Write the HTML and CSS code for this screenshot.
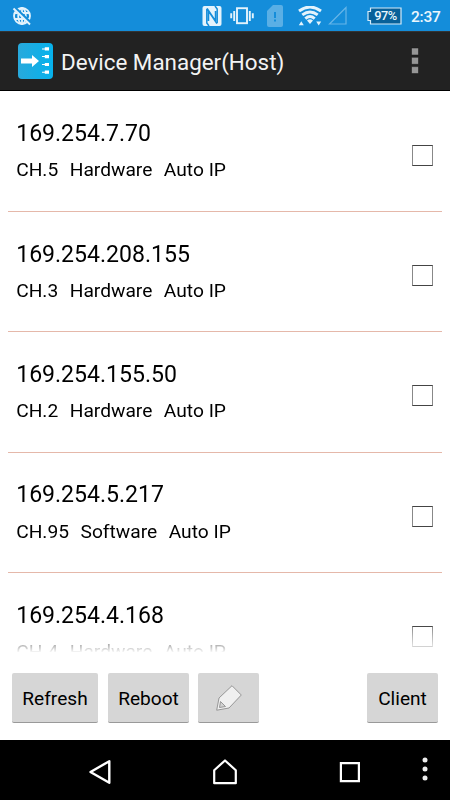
FILE: index.html
```html
<!DOCTYPE html>
<html lang="en">
<head>
<meta charset="utf-8">
<title>Device Manager</title>
<link rel="stylesheet" href="styles.css">
</head>
<body>
<div class="status">
  <svg class="globe" width="20" height="20" viewBox="0 0 20 20" fill="none" stroke="#e4f3fc" stroke-width="1.8"><circle cx="10" cy="10" r="8"/><ellipse cx="10" cy="10" rx="3.8" ry="8"/><path d="M10 2v16M2.500 7h15M2.500 13h15"/><path stroke="#148dda" stroke-width="3.600" d="M2 1.500l17 16"/><path stroke-width="1.900" d="M1.500 2.500l16.500 16"/></svg>
  <div class="icons">
    <svg width="20" height="20" viewBox="0 0 20 20"><rect x=".5" width="19" height="20" rx="2" fill="#e4f3fc"/><path fill="none" stroke="#148dda" stroke-width="1.500" d="M7 20L4.800 17V3.500L5.500 3l8 12V5M13 0l2.200 3v13.500l-.7.500-8-12v10"/></svg>
    <svg width="24" height="18" viewBox="0 0 24 18" fill="none" stroke="#e4f3fc" stroke-width="1.900"><rect x="7" y="1.200" width="10" height="15"/><path d="M4.200 4v10M19.800 4v10M1.200 6.200v5M22.800 6.200v5"/></svg>
    <svg width="16" height="22" viewBox="0 0 16 22"><path fill="#5aafe5" d="M6 0h8q2 0 2 2v18q0 2-2 2H2q-2 0-2-2V6z"/><path stroke="#148dda" stroke-width="2" d="M8 7v6M8 14.500v2"/></svg>
    <svg width="24" height="20" viewBox="0 0 24 20"><path fill="none" stroke="#e4f3fc" stroke-width="2.900" d="M1 5Q12-3 23 5M4.300 8.900Q12 2.900 19.700 8.900M7.300 12.600Q12 8.600 16.700 12.600"/><path fill="#e4f3fc" d="M9 14.500Q12 12 15 14.500L12 18zM.8 19.200l2.500-4 2.500 4zM18.200 15.500h5l-2.500 4z"/></svg>
    <svg width="19" height="19" viewBox="0 0 19 19" fill="none" stroke="#66b5e8" stroke-width="1.200"><path d="M1.500 18H18V1.500z"/></svg>
    <span class="battery"><svg width="35" height="18" viewBox="0 0 35 18"><path fill="#086099" stroke="#d5ecfa" stroke-width="1.200" d="M3.500 1H34v16H3.500v-3.500H1v-9h2.500z"/></svg><b>97%</b></span>
  </div>
  <span class="clock">2:37</span>
</div>
<header class="bar">
  <svg class="logo" width="35" height="36" viewBox="0 0 35 36"><defs><linearGradient id="g"><stop stop-color="#28a9dc"/><stop offset="1" stop-color="#06b2ec"/></linearGradient></defs><rect width="35" height="36" rx="4" fill="url(#g)"/><path fill="#fff" d="M3 15.500h11v-3.500l7 6-7 6v-3.500H3z"/><g fill="#fff"><path d="M26.800 4.300h4.200v3.200h-4.200zM26.800 12h4.200v3.200h-4.200zM26.800 19.900h4.200v3.200h-4.200zM26.800 27.600h4.200v3.200h-4.200z"/><path d="M24 5.400h3v1h-3zM24 13.100h3v1h-3zM24 21h3v1h-3zM24 28.700h3v1h-3z"/></g></svg>
  <h1>Device Manager(Host)</h1>
  <svg class="more" width="8" height="28" viewBox="0 0 8 28" fill="#969696" stroke="#111" stroke-width=".5"><path d="M.5 1h7v7h-7zM.5 10.300h7v7h-7zM.5 19.600h7v7h-7z"/></svg>
</header>
<main class="list">
  <div class="row"><div><div class="ip">169.254.7.70</div><div class="info"><span>CH.5</span><span>Hardware</span><span>Auto IP</span></div></div><i class="check"></i></div>
  <div class="row"><div><div class="ip">169.254.208.155</div><div class="info"><span>CH.3</span><span>Hardware</span><span>Auto IP</span></div></div><i class="check"></i></div>
  <div class="row"><div><div class="ip">169.254.155.50</div><div class="info"><span>CH.2</span><span>Hardware</span><span>Auto IP</span></div></div><i class="check"></i></div>
  <div class="row"><div><div class="ip">169.254.5.217</div><div class="info"><span>CH.95</span><span>Software</span><span>Auto IP</span></div></div><i class="check"></i></div>
  <div class="row"><div><div class="ip">169.254.4.168</div><div class="info"><span>CH.4</span><span>Hardware</span><span>Auto IP</span></div></div><i class="check"></i></div>
</main>
<div class="actions">
  <button class="refresh">Refresh</button>
  <button class="reboot">Reboot</button>
  <button class="edit" aria-label="Edit"><svg width="26" height="26" viewBox="0 0 26 26" fill="#f0f0f0" stroke="#8d8d8d" stroke-width=".9" stroke-linejoin="round"><path d="M.7 25.200L3 13 16 .7 25.300 10 13 23z"/><path fill="#d2d2d2" d="M3.500 22.500L4.500 16.500 9.500 21.500z"/></svg></button>
  <button class="client">Client</button>
</div>
<nav class="nav">
  <svg width="22" height="26" viewBox="0 0 22 26" fill="none" stroke="#fff" stroke-width="2.400" stroke-linejoin="round"><path d="M1.500 13L20.300 2.200v21.600z"/></svg>
  <svg width="26" height="26" viewBox="0 0 26 26" fill="none" stroke="#fff" stroke-width="2.200" stroke-linejoin="round"><path d="M2.200 24.200V11.200L13 1.500l10.800 9.700v13z"/></svg>
  <svg width="22" height="22" viewBox="0 0 22 22" fill="none" stroke="#fff" stroke-width="2.200"><path d="M1.900 2.100h18v18h-18z"/></svg>
  <svg width="6" height="24" viewBox="0 0 6 24" fill="#eee"><circle cx="3" cy="3" r="2.500"/><circle cx="3" cy="12" r="2.500"/><circle cx="3" cy="21" r="2.500"/></svg>
</nav>
</body>
</html>
```

FILE: styles.css
```css
* { box-sizing: border-box; }
body { margin: 0; width: 450px; height: 800px; overflow: hidden; background: #fff; color: #000; font-family: Roboto, sans-serif; display: flex; flex-direction: column; }
svg { display: block; flex: none; }
.status { height: 31px; background: #148dda; display: flex; align-items: center; padding: 0 10px 0 12px; color: #eaf6fd; }
.icons { display: flex; align-items: center; margin-left: auto; }
.icons > :nth-child(2) { margin-left: 8px; }
.icons > :nth-child(3) { margin-left: 13px; }
.icons > :nth-child(4) { margin-left: 15px; }
.icons > :nth-child(5) { margin-left: 6px; }
.battery { display: grid; place-items: center; margin-left: 20px; }
.battery > * { grid-area: 1 / 1; }
.battery b { font-size: 12.800px; font-weight: 500; line-height: 18px; padding-left: 2px; letter-spacing: -.5px; }
.clock { width: 29px; margin-left: 9px; font-size: 15.500px; font-weight: 500; white-space: nowrap; letter-spacing: -.2px; position: relative; top: 1px; }
.bar { height: 60px; background: #222; border-top: 1px solid #343434; border-bottom: 1px solid #000; display: flex; align-items: center; padding: 0 31px 0 18px; }
h1 { margin: 1px 0 0 8px; font-size: 22.400px; font-weight: 400; line-height: 30px; color: #f3f3f3; }
.more { margin-left: auto; }
.list { height: 561px; padding: .6px 8px 0; overflow: hidden; -webkit-mask-image: linear-gradient(#000 535px, transparent 562px); mask-image: linear-gradient(#000 535px, transparent 562px); }
.row { height: 120.400px; border-bottom: 1px solid #e5b8aa; display: flex; justify-content: space-between; padding: 26.600px 9px 0 8.200px; }
.ip { font-size: 23.050px; line-height: 31px; }
.info { display: flex; gap: 11.500px; font-size: 19.200px; line-height: 25px; margin-top: 8.200px; }
.check { width: 21px; height: 21px; border: 1px solid #444; border-left-color: #888; border-right-color: #888; margin-top: 26.400px; }
.actions { height: 88px; display: flex; align-items: flex-start; padding: 21px 12px 0; }
button { height: 50px; margin: 0; padding: 1px 0 0; border: 0; border-bottom: 1px solid #999; border-radius: 2px; background: #d6d6d6; color: #000; font: 19.100px Roboto, sans-serif; }
.refresh { width: 86px; }
.reboot { width: 81px; margin-left: 10px; }
.edit { width: 61px; margin-left: 9px; display: flex; align-items: center; justify-content: center; }
.client { width: 71px; margin-left: auto; }
.nav { height: 60px; background: #000; display: flex; align-items: center; padding: 3px 22px 0 89px; }
.nav svg:nth-child(2) { margin-left: 101px; }
.nav svg:nth-child(3) { margin-left: 101px; }
.nav svg:nth-child(4) { margin-left: auto; margin-top: -5px; }
```
